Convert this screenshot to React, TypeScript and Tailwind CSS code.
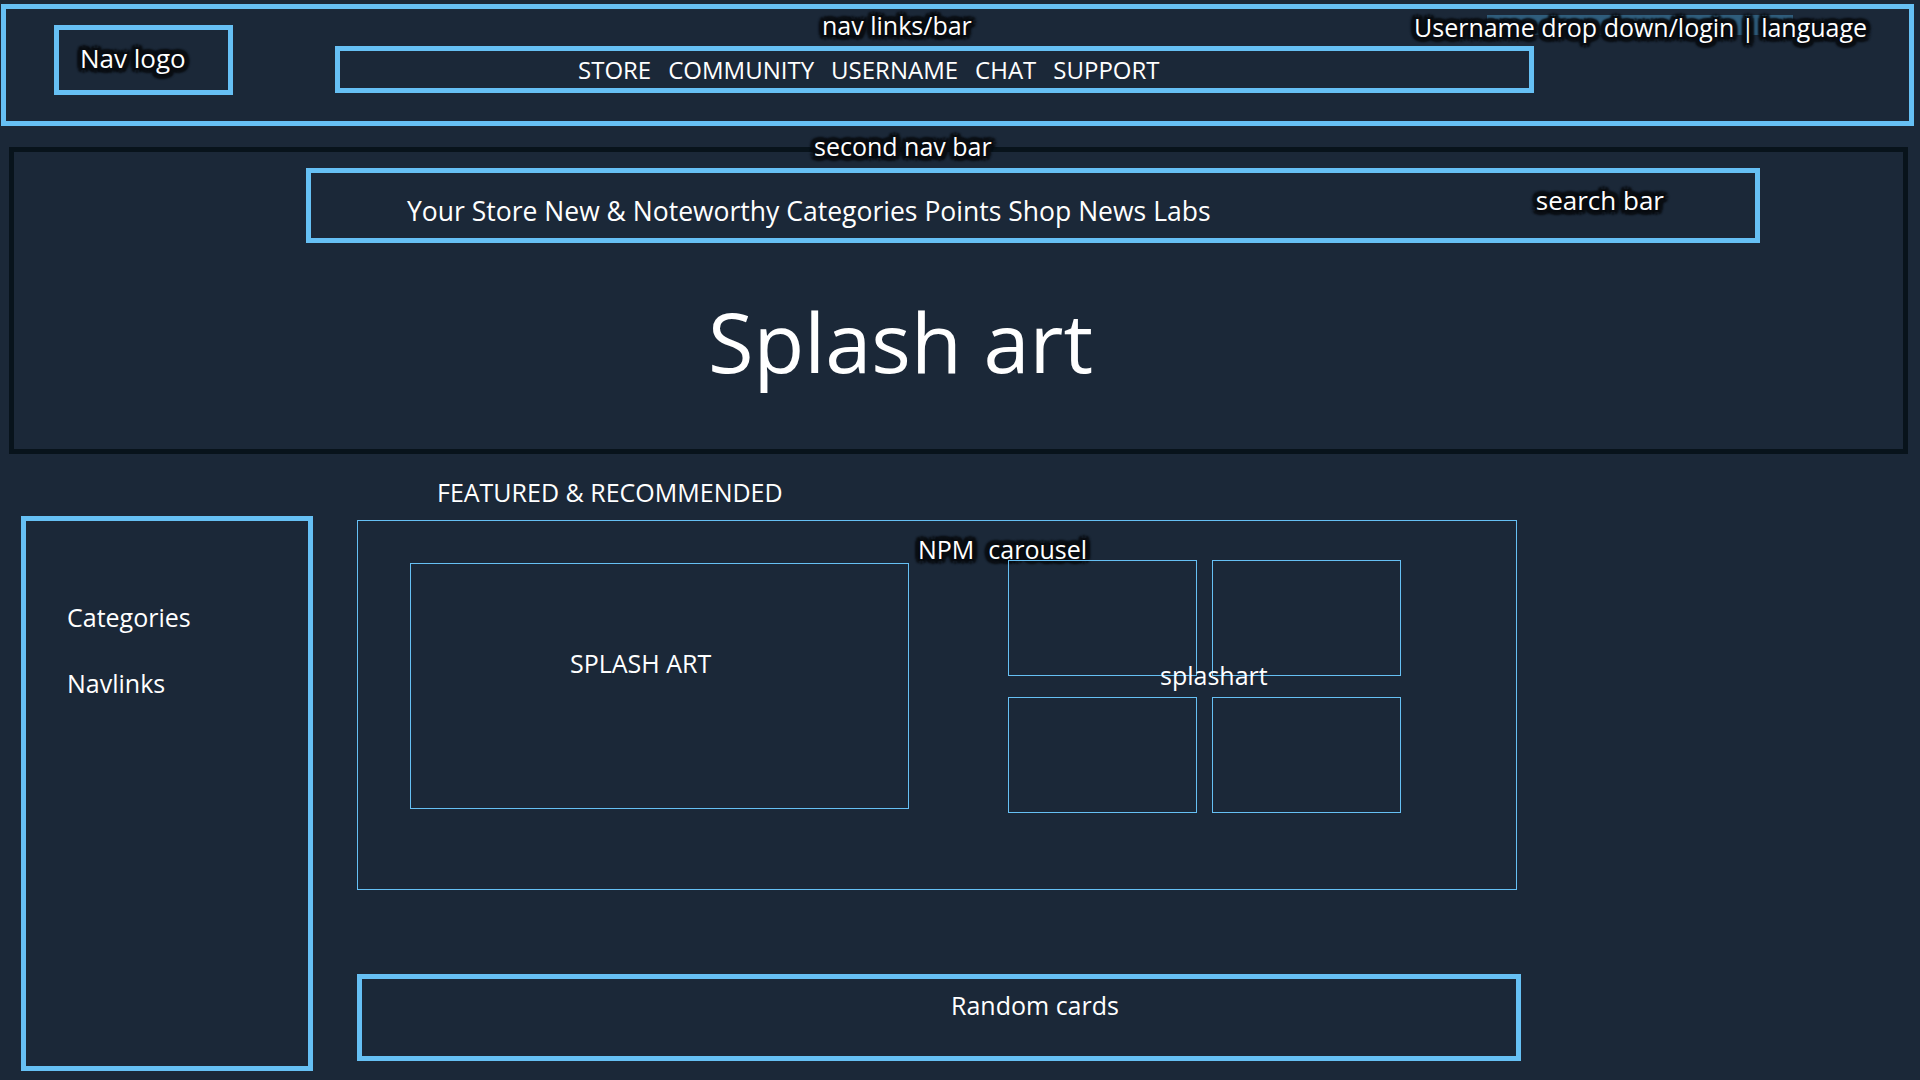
import React from "react";

/* Wireframe of a store front page: header, second nav with splash, sidebar + featured carousel */

const halo =
  "relative text-white [text-shadow:5px_0_2px_#0a0e13,-5px_0_2px_#0a0e13,0_5px_2px_#0a0e13,0_-5px_2px_#0a0e13,4px_3px_2px_#0a0e13,-4px_-3px_2px_#0a0e13,4px_-3px_2px_#0a0e13,-4px_3px_2px_#0a0e13,3px_4px_2px_#0a0e13,-3px_-4px_2px_#0a0e13,3px_-4px_2px_#0a0e13,-3px_4px_2px_#0a0e13,2px_0_0_#0a0e13,-2px_0_0_#0a0e13,0_2px_0_#0a0e13,0_-2px_0_#0a0e13,2px_2px_0_#0a0e13,-2px_-2px_0_#0a0e13,2px_-2px_0_#0a0e13,-2px_2px_0_#0a0e13]";

const NAV_LINKS = ["STORE", "COMMUNITY", "USERNAME", "CHAT", "SUPPORT"];
const STORE_LINKS = ["Your Store", "New & Noteworthy", "Categories", "Points Shop", "News", "Labs"];

function Header() {
  return (
    <header className="relative ml-[1px] mt-[4px] flex h-[122px] w-[1913px] items-start border-[5px] border-[#66c0f4]">
      {/* Logo */}
      <div className="ml-[48px] mt-[16px] flex h-[70px] w-[179px] items-start border-[5px] border-[#66c0f4] pl-[21px] pt-[11px]">
        <span className={`${halo} text-[26px] leading-[34px]`}>Nav logo</span>
      </div>

      {/* Nav links */}
      <nav className="ml-[102px] mt-[37px] flex h-[47px] w-[1199px] items-center gap-[17px] border-[5px] border-[#66c0f4] pl-[238px] text-[24px] leading-[32px] text-white">
        {NAV_LINKS.map((l) => (
          <span key={l}>{l}</span>
        ))}
      </nav>

      <span className={`${halo} !absolute left-[816px] top-[0px] text-[25px] leading-[32px]`}>
        nav links/bar
      </span>

      {/* user / language */}
      <div className="absolute left-[1408px] top-[2px]">
        <div className="absolute left-[73px] top-[4px] h-[20px] w-[306px] bg-[#2f5d7c]" />
        <span className={`${halo} text-[25px] leading-[32px]`}>Username drop down/login | language</span>
      </div>
    </header>
  );
}

function SecondNav() {
  return (
    <section className="relative ml-[9px] mt-[21px] h-[307px] w-[1899px] border-[5px] border-[#08131b]">
      <span className={`${halo} !absolute left-[800px] top-[-22px] text-[25px] leading-[32px]`}>
        second nav bar
      </span>

      {/* Store links + search */}
      <div className="ml-[292px] mt-[16px] flex h-[75px] w-[1454px] items-start border-[5px] border-[#66c0f4] pl-[96px] pr-[91px]">
        <div className="mt-[20px] flex gap-[7px] text-[26.5px] leading-[36px] text-white">
          {STORE_LINKS.map((l) => (
            <span key={l}>{l}</span>
          ))}
        </div>
        <span className={`${halo} ml-auto mt-[10px] text-[26px] leading-[34px]`}>search bar</span>
      </div>

      <h1 className="ml-[694px] mt-[56px] text-[83px] leading-none text-white">Splash art</h1>
    </section>
  );
}

function Sidebar() {
  return (
    <aside className="ml-[21px] mt-[62px] flex h-[555px] w-[292px] flex-col gap-[34px] border-[5px] border-[#66c0f4] pl-[41px] pt-[80px] text-[25px] leading-[32px] text-white">
      <span>Categories</span>
      <span>Navlinks</span>
    </aside>
  );
}

function Carousel() {
  return (
    <div className="relative mt-[11px] flex h-[370px] w-[1160px] items-start border border-[#66c0f4]">
      <div className="absolute left-[560px] top-[12px] flex gap-[14px] text-[25px] leading-[32px]">
        <span className={halo}>NPM</span>
        <span className={halo}>carousel</span>
      </div>

      {/* Main slide */}
      <div className="ml-[52px] mt-[42px] h-[246px] w-[499px] border border-[#66c0f4] pl-[159px] pt-[83px] text-[25px] leading-[32px] text-white">
        SPLASH ART
      </div>

      {/* Thumbnails */}
      <div className="relative ml-[99px] mt-[39px] grid grid-cols-[189px_189px] grid-rows-[116px_116px] gap-x-[15px] gap-y-[21px]">
        {[0, 1, 2, 3].map((i) => (
          <div key={i} className="border border-[#66c0f4]" />
        ))}
        <span className="absolute left-[152px] top-[99px] text-[25px] leading-[32px] text-white">splashart</span>
      </div>
    </div>
  );
}

export default function App() {
  return (
    <div className="h-[1080px] w-[1920px] overflow-hidden bg-[#1b2838] font-['Open_Sans',sans-serif]">
      <Header />
      <SecondNav />

      <div className="flex items-start">
        <Sidebar />

        <main className="ml-[44px] flex flex-col">
          <h2 className="ml-[80px] mt-[21px] text-[25px] leading-[34px] text-white">FEATURED &amp; RECOMMENDED</h2>
          <Carousel />

          <div className="mt-[84px] h-[87px] w-[1164px] border-[5px] border-[#66c0f4] pl-[589px] pt-[10px] text-[25px] leading-[32px] text-white">
            Random cards
          </div>
        </main>
      </div>
    </div>
  );
}
